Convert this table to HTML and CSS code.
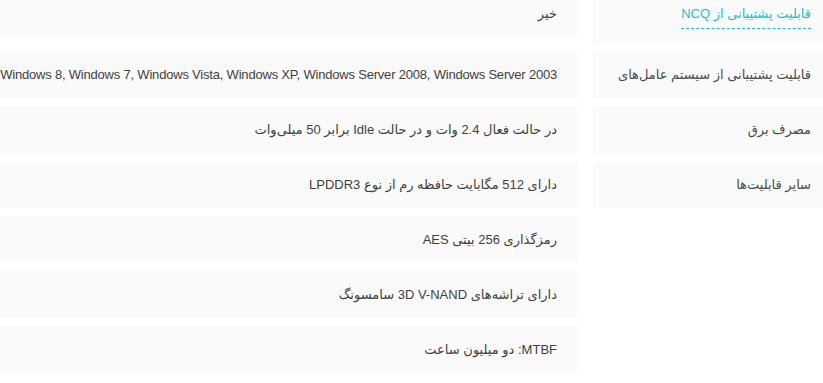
FILE: index.html
```html
<!DOCTYPE html>
<html lang="fa" dir="rtl">
<head>
    <meta charset="UTF-8" />
    <meta name="viewport" content="width=device-width, initial-scale=1" />
    <title>مشخصات فنی</title>
    <link rel="stylesheet" href="styles.css">
</head>
<body>
    <ul class="params-list">
        <li class="params-row">
            <div class="params-title">
                <a href="#" class="params-link">قابلیت پشتیبانی از NCQ</a>
            </div>
            <div class="params-values">
                <div class="params-value">خیر</div>
            </div>
        </li>

        <li class="params-row">
            <div class="params-title">قابلیت پشتیبانی از سیستم عامل‌های</div>
            <div class="params-values">
                <div class="params-value params-value-long">Windows 8, Windows 7, Windows Vista, Windows XP, Windows Server 2008, Windows Server 2003</div>
            </div>
        </li>

        <li class="params-row">
            <div class="params-title">مصرف برق</div>
            <div class="params-values">
                <div class="params-value">در حالت فعال 2.4 وات و در حالت Idle برابر 50 میلی‌وات</div>
            </div>
        </li>

        <li class="params-row">
            <div class="params-title">سایر قابلیت‌ها</div>
            <div class="params-values">
                <div class="params-value">دارای 512 مگابایت حافظه رم از نوع LPDDR3</div>
                <div class="params-value">رمزگذاری 256 بیتی AES</div>
                <div class="params-value">دارای تراشه‌های 3D V-NAND سامسونگ</div>
                <div class="params-value">MTBF: دو میلیون ساعت</div>
            </div>
        </li>
    </ul>
</body>
</html>
```

FILE: styles.css
```css
body {
    font-family: "Liberation Sans", "DejaVu Sans", sans-serif;
    font-size: 13px;
    line-height: 19px;
    color: #3F3F3F;
    background-color: #FFFFFF;
    margin: 0;
    overflow: hidden;
}
.params-list {
    list-style: none;
    margin: -10px 0 0;
    padding: 0;
    display: flex;
    flex-direction: column;
    gap: 8px;
}
.params-row {
    display: flex;
    align-items: flex-start;
    gap: 16px;
}
.params-title {
    width: 230px;
    flex-shrink: 0;
    box-sizing: border-box;
    padding: 14px 12px;
    background-color: #FAFAFA;
    color: #4A4A4A;
}
.params-link {
    display: inline-block;
    color: #19BFD3;
    text-decoration: none;
    padding-bottom: 5px;
    border-bottom: 1px dashed #19BFD3;
}
.params-values {
    flex: 1;
    min-width: 0;
    display: flex;
    flex-direction: column;
    gap: 8px;
}
.params-value {
    padding: 14px 20px 14px 4px;
    background-color: #FAFAFA;
    white-space: nowrap;
}
.params-value-long {
    letter-spacing: -0.2px;
}
```
